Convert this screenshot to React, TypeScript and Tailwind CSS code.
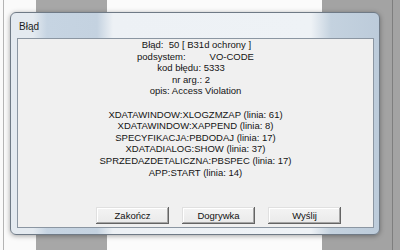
import React from "react";

const font = { fontFamily: '"Liberation Sans", Arial, sans-serif' };

function Btn({ label }: { label: string }) {
  return (
    <div className="w-[73px] h-[17px] flex items-center justify-center bg-[linear-gradient(#f4f4f4,#e9e9e9)] text-[9.5px] text-[#111] shadow-[inset_-1px_-1px_#646464,inset_1px_1px_#e0e0e0,inset_-2px_-2px_#a6a6a6,inset_2px_2px_#ffffff]">
      {label}
    </div>
  );
}

export default function App() {
  const stack = [
    "XDATAWINDOW:XLOGZMZAP (linia: 61)",
    "XDATAWINDOW:XAPPEND (linia: 8)",
    "SPECYFIKACJA:PBDODAJ (linia: 17)",
    "XDATADIALOG:SHOW (linia: 37)",
    "SPRZEDAZDETALICZNA:PBSPEC (linia: 17)",
    "APP:START (linia: 14)",
  ];
  return (
    <div className="relative w-[400px] h-[250px] overflow-hidden" style={font}>
      <div className="flex w-full h-full">
        <div className="w-[3px] bg-[#fafafa]" />
        <div className="w-[1px] bg-[#b4b4b4]" />
        <div className="w-[32px] bg-[#fafafa]" />
        <div className="w-[71px] bg-[#a7a7a7]" />
        <div className="w-[215px] bg-[#fbfbfb]" />
        <div className="w-[70px] bg-[#a3a3a3]" />
        <div className="w-[1px] bg-[#7e7e7e]" />
        <div className="flex-1 bg-[#a3a3a3]" />
      </div>

      <div className="absolute left-[10px] top-[12px] w-[370px] h-[223px] rounded-[6px] border border-[#6f7a86] shadow-[0_1px_5px_rgba(0,0,0,0.35)] bg-[linear-gradient(90deg,#e4eaf0_0px,#e4eaf0_22px,#c6d4e2_36px,#c4d2e0_86px,#edf1f5_102px,#eef2f6_300px,#c4d2df_320px,#bccbda_370px)] flex flex-col">
        <div className="h-[25px] flex items-center pl-[8px] pt-[2px] text-[10px] text-[#1a1a1a]">
          Błąd
        </div>
        <div className="ml-[6px] mr-[5px] h-[190px] border border-[#8b96a2] bg-[#f0f0f0] flex flex-col text-[9.5px] leading-[11.6px] text-[#141414]">
          <div className="flex flex-col items-center">
            <div className="whitespace-pre pl-[2px]">Błąd:  50 [ B31d ochrony ]</div>
            <div className="whitespace-pre">
              podsystem:<span className="ml-[24px]">VO-CODE</span>
            </div>
            <div className="pr-[9px]">kod błędu: 5333</div>
            <div className="pr-[9px]">nr arg.: 2</div>
            <div>opis: Access Violation</div>
            <div className="h-[11.6px]" />
            {stack.map((s) => (
              <div key={s}>{s}</div>
            ))}
          </div>
          <div className="mt-auto mb-[3px] flex justify-end pr-[32px] gap-[13px]">
            <Btn label="Zakończ" />
            <Btn label="Dogrywka" />
            <Btn label="Wyślij" />
          </div>
        </div>
      </div>
    </div>
  );
}
